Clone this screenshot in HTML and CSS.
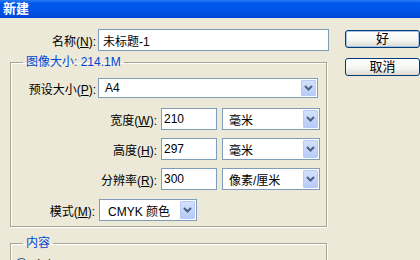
FILE: index.html
```html
<!DOCTYPE html>
<html lang="zh-CN">
<head>
  <meta charset="UTF-8" />
  <title>新建</title>
  <link rel="stylesheet" href="styles.css">
</head>
<body>

  <!-- barra de titulo -->
  <div class="titlebar">新建</div>

  <div class="dialog">
    <div class="main">
      <div class="row name-row">
        <div class="lbl lbl-name">名称(<u>N</u>):</div>
        <div class="field field-name">未标题-1</div>
      </div>

      <fieldset class="group group-size">
        <legend>图像大小: 214.1M</legend>

        <div class="row row-preset">
          <div class="lbl lbl-preset">预设大小(<u>P</u>):</div>
          <div class="field select select-preset">A4<span class="arrow"><svg width="9" height="6" viewBox="0 0 9 6"><path d="M1 1 L4.5 4.5 L8 1" fill="none" stroke="#4d6185" stroke-width="2"/></svg></span></div>
        </div>

        <div class="row row-dim">
          <div class="lbl lbl-dim">宽度(<u>W</u>):</div>
          <div class="field num">210</div>
          <div class="field select unit">毫米<span class="arrow"><svg width="9" height="6" viewBox="0 0 9 6"><path d="M1 1 L4.5 4.5 L8 1" fill="none" stroke="#4d6185" stroke-width="2"/></svg></span></div>
        </div>

        <div class="row row-dim">
          <div class="lbl lbl-dim">高度(<u>H</u>):</div>
          <div class="field num">297</div>
          <div class="field select unit">毫米<span class="arrow"><svg width="9" height="6" viewBox="0 0 9 6"><path d="M1 1 L4.5 4.5 L8 1" fill="none" stroke="#4d6185" stroke-width="2"/></svg></span></div>
        </div>

        <div class="row row-dim">
          <div class="lbl lbl-dim">分辨率(<u>R</u>):</div>
          <div class="field num">300</div>
          <div class="field select unit">像素/厘米<span class="arrow"><svg width="9" height="6" viewBox="0 0 9 6"><path d="M1 1 L4.5 4.5 L8 1" fill="none" stroke="#4d6185" stroke-width="2"/></svg></span></div>
        </div>

        <div class="row row-mode">
          <div class="lbl lbl-mode">模式(<u>M</u>):</div>
          <div class="field select select-mode">CMYK 颜色<span class="arrow"><svg width="9" height="6" viewBox="0 0 9 6"><path d="M1 1 L4.5 4.5 L8 1" fill="none" stroke="#4d6185" stroke-width="2"/></svg></span></div>
        </div>
      </fieldset>

      <fieldset class="group group-content">
        <legend>内容</legend>
        <div class="radio-row">
          <span class="radio"></span>
          <span>白色(<u>T</u>)</span>
        </div>
      </fieldset>
    </div>

    <!-- botoes -->
    <div class="buttons">
      <div class="btn btn-default">好</div>
      <div class="btn">取消</div>
    </div>
  </div>

</body>
</html>
```

FILE: styles.css
```css
body {
  margin: 0;
  background-color: #ece9d8;
  font-family: "Liberation Sans", "Noto Sans CJK SC", sans-serif;
  font-size: 12px;
  color: #000;
  overflow: hidden;
}

.titlebar {
  height: 18px;
  line-height: 18px;
  padding-left: 3px;
  color: #fff;
  font-weight: bold;
  font-size: 13px;
  background: linear-gradient(#2a7cf2 0, #0058ee 18%, #0055e6 60%, #0046d6 100%);
}

.dialog {
  display: flex;
}

.main {
  width: 320px;
  padding-left: 10px;
}

.row {
  display: flex;
  align-items: center;
}

.lbl {
  text-align: right;
  white-space: nowrap;
}

.field {
  box-sizing: border-box;
  background-color: #fff;
  border: 1px solid #7f9db9;
  padding-left: 4px;
  display: flex;
  align-items: center;
  white-space: nowrap;
}

.name-row {
  margin-top: 11px;
}

.lbl-name {
  width: 86px;
  margin-right: 2px;
}

.field-name {
  width: 231px;
  height: 22px;
  flex-shrink: 0;
}

.group {
  margin: 0;
  padding: 0;
  width: 317px;
  box-sizing: border-box;
  border: 1px solid #a7a694;
  box-shadow: 1px 1px 0 #fff, inset 1px 1px 0 #fff;
}

.group legend {
  margin-left: 12px;
  padding: 0 3px;
  color: #0046d5;
  line-height: 14px;
}

.group-size {
  margin-top: 4px;
  padding-bottom: 5px;
}

.row-preset {
  margin-top: 9px;
}

.lbl-preset {
  width: 85px;
  margin-right: 2px;
}

.select {
  position: relative;
  padding-left: 6px;
}

.select-preset {
  width: 220px;
  height: 20px;
}

.arrow {
  position: absolute;
  right: 1px;
  top: 1px;
  bottom: 1px;
  width: 15px;
  box-sizing: border-box;
  border: 1px solid #b8cbf6;
  border-radius: 1px;
  background: linear-gradient(#d4e1fc, #b7cbf8);
  display: flex;
  align-items: center;
  justify-content: center;
}

.row-dim {
  margin-top: 8px;
}

.row-preset + .row-dim {
  margin-top: 10px;
}

.lbl-dim {
  width: 146px;
  margin-right: 4px;
}

.num {
  width: 56px;
  height: 22px;
  padding-left: 2px;
  margin-right: 5px;
}

.unit {
  width: 98px;
  height: 22px;
}

.row-mode {
  margin-top: 9px;
}

.lbl-mode {
  width: 84px;
  margin-right: 4px;
}

.select-mode {
  width: 98px;
  height: 22px;
  padding-left: 8px;
}

.group-content {
  margin-top: 9px;
  height: 40px;
}

.radio-row {
  display: flex;
  align-items: center;
  gap: 5px;
  margin-top: 6px;
  margin-left: 4px;
}

.radio {
  width: 13px;
  height: 13px;
  box-sizing: border-box;
  border: 1px solid #1c5180;
  border-radius: 50%;
  background: linear-gradient(135deg, #dcdcd6, #fff);
}

.buttons {
  margin-left: 15px;
  padding-top: 12px;
  display: flex;
  flex-direction: column;
  gap: 10px;
}

.btn {
  width: 75px;
  height: 18px;
  box-sizing: border-box;
  border: 1px solid #003c74;
  border-radius: 3px;
  background: linear-gradient(#fff, #f4f4f0 60%, #dcdad0);
  text-align: center;
  line-height: 16px;
  font-size: 13px;
}

.btn-default {
  box-shadow: inset 0 0 0 1px #a6c0ea;
}
```
